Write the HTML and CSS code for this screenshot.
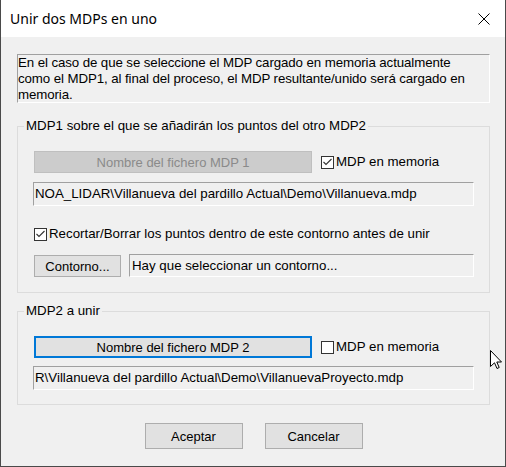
FILE: index.html
```html
<!DOCTYPE html>
<html lang="es">
<head>
<meta charset="utf-8">
<title>Unir dos MDPs en uno</title>
<link rel="stylesheet" href="styles.css">
</head>
<body>
<div class="window">
  <div class="titlebar">
    <span class="title">Unir dos MDPs en uno</span>
    <svg class="close" width="12" height="12" viewBox="0 0 12 12"><path d="M0.5 0.5 L11.5 11.5 M11.5 0.5 L0.5 11.5" stroke="#000" stroke-width="1" fill="none"/></svg>
  </div>
  <div class="content">
    <div class="info">En el caso de que se seleccione el MDP cargado en memoria actualmente<br>como el MDP1, al final del proceso, el MDP resultante/unido será cargado en<br>memoria.</div>

    <div class="group g1">
      <div class="legend">MDP1 sobre el que se añadirán los puntos del otro MDP2</div>
      <div class="row btnrow">
        <div class="btn file disabled">Nombre del fichero MDP 1</div>
        <div class="check">
          <span class="box"><svg width="11" height="11" viewBox="0 0 11 11"><path d="M1.5 5 L4 7.5 L9.5 2" stroke="#333" stroke-width="1.1" fill="none"/></svg></span>
          <span class="label">MDP en memoria</span>
        </div>
      </div>
      <div class="field">NOA_LIDAR\Villanueva del pardillo Actual\Demo\Villanueva.mdp</div>
      <div class="row checkrow">
        <div class="check">
          <span class="box"><svg width="11" height="11" viewBox="0 0 11 11"><path d="M1.5 5 L4 7.5 L9.5 2" stroke="#333" stroke-width="1.1" fill="none"/></svg></span>
          <span class="label">Recortar/Borrar los puntos dentro de este contorno antes de unir</span>
        </div>
      </div>
      <div class="row controw">
        <div class="btn contorno">Contorno...</div>
        <div class="field inline">Hay que seleccionar un contorno...</div>
      </div>
    </div>

    <div class="group g2">
      <div class="legend">MDP2 a unir</div>
      <div class="row btnrow">
        <div class="btn file focused">Nombre del fichero MDP 2</div>
        <div class="check">
          <span class="box"></span>
          <span class="label">MDP en memoria</span>
        </div>
      </div>
      <div class="field f2">R\Villanueva del pardillo Actual\Demo\VillanuevaProyecto.mdp</div>
    </div>

    <div class="actions">
      <div class="btn action">Aceptar</div>
      <div class="btn action">Cancelar</div>
    </div>
  </div>
  <svg class="cursor" width="13" height="20" viewBox="0 0 13 20"><path d="M0.5 0.5 L0.5 16.5 L4.5 12.8 L7 18.5 L9.2 17.5 L6.8 12 L11.5 12 Z" fill="#fff" stroke="#000" stroke-width="1" stroke-linejoin="miter"/></svg>
</div>
</body>
</html>
```

FILE: styles.css
```css
* { box-sizing: border-box; }
html, body { margin: 0; padding: 0; }
body {
  width: 506px;
  height: 467px;
  background: #3a3a3a;
  font-family: "Liberation Sans", Arial, sans-serif;
  font-size: 13.3px;
  color: #000;
  overflow: hidden;
}
.window {
  position: relative;
  width: 506px;
  height: 467px;
  background: #f0f0f0;
  border: 1px solid #4a4a4a;
  border-top: 0;
  display: flex;
  flex-direction: column;
}
.titlebar {
  flex: none;
  height: 37px;
  background: #fff;
  display: flex;
  align-items: center;
  justify-content: space-between;
  padding: 0 15px 0 9px;
}
.title {
  font-family: "Noto Sans", "Open Sans", sans-serif;
  font-size: 14px;
  line-height: 20px;
}
.close { display: block; }
.content {
  padding: 17px 15px 0 16px;
}
.info {
  height: 49px;
  border: 1px solid;
  border-color: #a0a0a0 #ffffff #ffffff #a0a0a0;
  line-height: 16px;
  white-space: nowrap;
  letter-spacing: -0.1px;
}
.group {
  border: 1px solid #dcdcdc;
  padding: 0 15px 15px 16px;
}
.g1 { margin-top: 23px; }
.g2 { margin-top: 18px; padding-bottom: 14px; }
.legend {
  width: max-content;
  margin: -9px 0 0 -10px;
  padding: 0 2px;
  line-height: 16px;
  background: #f0f0f0;
}
.row { display: flex; align-items: center; }
.btnrow { height: 22px; margin-top: 17px; }
.btn {
  display: flex;
  align-items: center;
  justify-content: center;
  background: #e1e1e1;
  border: 1px solid #adadad;
  white-space: nowrap;
  font-size: 13px;
}
.btn.file { width: 278px; height: 22px; flex: none; }
.btn.disabled {
  background: #cccccc;
  border-color: #bfbfbf;
  color: #8a8a8a;
}
.btn.focused {
  border: 2px solid #0078d7;
}
.check { display: flex; align-items: center; margin-left: 9px; }
.checkrow .check { margin-left: 0; }
.box {
  width: 13px;
  height: 13px;
  border: 1px solid #333;
  background: #fff;
  display: flex;
  align-items: center;
  justify-content: center;
  flex: none;
}
.box svg { display: block; }
.label { margin-left: 2px; white-space: nowrap; line-height: 16px; }
.field {
  height: 24px;
  margin: 9px 0 0 -1px;
  border: 1px solid;
  border-color: #a0a0a0 #ffffff #ffffff #a0a0a0;
  padding-left: 1px;
  line-height: 22px;
  white-space: nowrap;
  overflow: hidden;
}
.field.f2 { margin-top: 8px; }
.checkrow { height: 16px; margin-top: 20px; }
.controw { height: 23px; margin-top: 12px; align-items: flex-end; }
.btn.contorno { width: 87px; height: 22px; flex: none; }
.field.inline {
  flex: 1;
  height: 23px;
  margin: 0 0 0 8px;
  padding-left: 2px;
  line-height: 21px;
  align-self: stretch;
}
.actions {
  display: flex;
  justify-content: center;
  gap: 22px;
  margin-top: 18px;
}
.btn.action { width: 98px; height: 26px; }
.cursor {
  position: absolute;
  left: 489px;
  top: 350px;
}
```
